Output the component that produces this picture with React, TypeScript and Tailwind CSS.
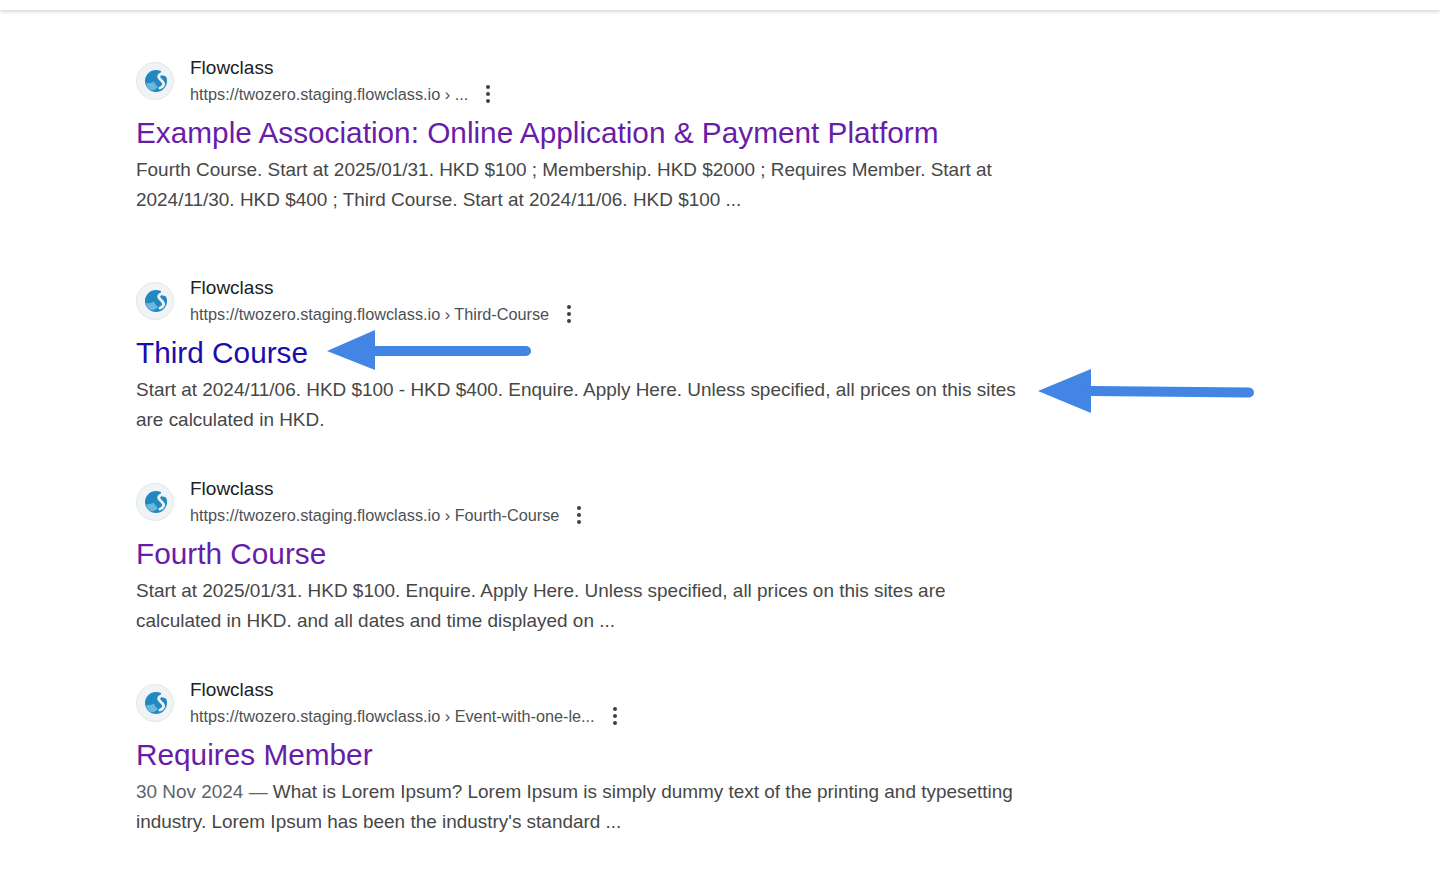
import React from "react";

interface Result {
  path: string;
  title: string;
  visited: boolean;
  date?: string;
  lines: [string, string];
  gap: string;
}

const results: Result[] = [
  {
    path: "https://twozero.staging.flowclass.io › ...",
    title: "Example Association: Online Application & Payment Platform",
    visited: true,
    lines: [
      "Fourth Course. Start at 2025/01/31. HKD $100 ; Membership. HKD $2000 ; Requires Member. Start at",
      "2024/11/30. HKD $400 ; Third Course. Start at 2024/11/06. HKD $100 ...",
    ],
    gap: "mb-[60px]",
  },
  {
    path: "https://twozero.staging.flowclass.io › Third-Course",
    title: "Third Course",
    visited: false,
    lines: [
      "Start at 2024/11/06. HKD $100 - HKD $400. Enquire. Apply Here. Unless specified, all prices on this sites",
      "are calculated in HKD.",
    ],
    gap: "mb-[41px]",
  },
  {
    path: "https://twozero.staging.flowclass.io › Fourth-Course",
    title: "Fourth Course",
    visited: true,
    lines: [
      "Start at 2025/01/31. HKD $100. Enquire. Apply Here. Unless specified, all prices on this sites are",
      "calculated in HKD. and all dates and time displayed on ...",
    ],
    gap: "mb-[41px]",
  },
  {
    path: "https://twozero.staging.flowclass.io › Event-with-one-le...",
    title: "Requires Member",
    visited: true,
    date: "30 Nov 2024 — ",
    lines: [
      "What is Lorem Ipsum? Lorem Ipsum is simply dummy text of the printing and typesetting",
      "industry. Lorem Ipsum has been the industry's standard ...",
    ],
    gap: "",
  },
];

const Favicon = () => (
  <div className="w-[38px] h-[38px] rounded-full bg-[#f1f4f6] border border-[#e3e6e8] flex items-center justify-center shrink-0">
    <svg className="blur-[0.5px] ml-[1px] -mt-[1px]" width="26" height="26" viewBox="0 0 26 26">
      {/* swan mark: blue disc, notch at top right, light S through it */}
      <circle cx="13" cy="13" r="11" fill="#2288c2" />
      <path d="M3 15c3 .5 6 0 8-1.500 1 2.500 2 4 4 5.500-2 2.500-4.500 3.500-7.500 3C5 20 3.500 18 3 15z" fill="#6fb6da" />
      <path d="M18 2h7v8c-1.500-1.500-3.500-2.500-5.500-2.500-1 0-1.500-1-1.500-2.500z" fill="#f1f4f6" />
      <path d="M22 5.500C17 4.500 14.500 8 16.500 10.500 18.500 13 21.500 14 20.500 17c-.6 1.500-2 2.500-3.500 3" stroke="#f1f4f6" strokeWidth="2.800" fill="none" strokeLinecap="round" />
    </svg>
  </div>
);

const Dots = () => (
  <div className="ml-[18px] flex flex-col gap-[3px]">
    <span className="w-[4px] h-[4px] rounded-full bg-[#3c4043]" />
    <span className="w-[4px] h-[4px] rounded-full bg-[#3c4043]" />
    <span className="w-[4px] h-[4px] rounded-full bg-[#3c4043]" />
  </div>
);

const Arrow = ({ className, head, tail }: { className: string; head: string; tail: string }) => (
  <svg className={className} width="230" height="46" viewBox="0 0 230 46">
    <polygon points={head} fill="#4285e4" />
    <path d={tail} stroke="#4285e4" strokeWidth="10" strokeLinecap="round" fill="none" />
  </svg>
);

export default function App() {
  return (
    <div className="relative min-h-[876px] bg-white overflow-hidden font-['Liberation_Sans',Arial,sans-serif]">
      <div className="h-[10px] bg-white shadow-[0_1px_4px_rgba(0,0,0,0.22)]" />
      <div className="pt-[45px] pl-[136px] w-[1030px]">
        {results.map((r) => (
          <div key={r.title} className={r.gap}>
            <div className="flex items-center h-[52px]">
              <Favicon />
              <div className="ml-[16px]">
                <div className="text-[19px] leading-[26px] text-[#202124]">Flowclass</div>
                <div className="flex items-center h-[26px]">
                  <span className="text-[16.25px] leading-[26px] text-[#4d5156]">{r.path}</span>
                  <Dots />
                </div>
              </div>
            </div>
            <div
              className={`text-[29.77px] leading-[40px] mt-[6px] whitespace-nowrap ${
                r.visited ? "text-[#681da8]" : "text-[#1a0dab]"
              }`}
            >
              {r.title}
            </div>
            <div className="text-[18.95px] leading-[30px] mt-[2px] text-[#474747] whitespace-nowrap">
              <div>
                {r.date && <span className="text-[#5f6368]">{r.date}</span>}
                {r.lines[0]}
              </div>
              <div>{r.lines[1]}</div>
            </div>
          </div>
        ))}
      </div>
      <Arrow className="absolute left-[326px] top-[328px]" head="1,23 49,2 49,42" tail="M49,23 H200" />
      <Arrow className="absolute left-[1038px] top-[368px]" head="0,23 53,1 53,45" tail="M53,23 L211,24.500" />
    </div>
  );
}
